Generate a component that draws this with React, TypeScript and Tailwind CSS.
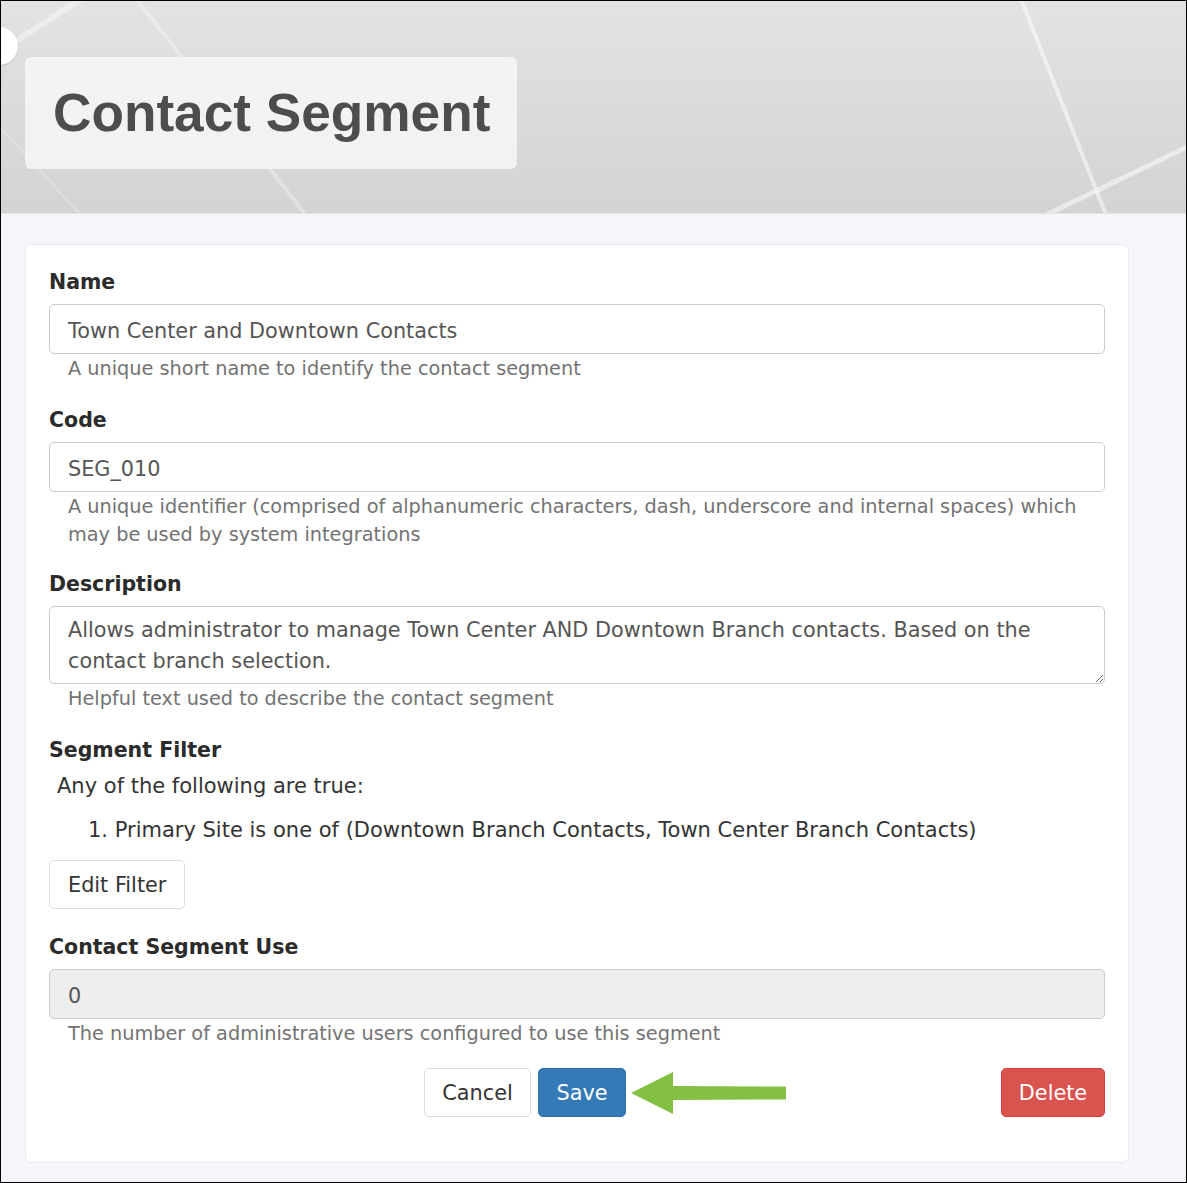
import React from 'react';

// Banner decoration: soft diagonal light streaks over the grey gradient.
const BannerStreaks: React.FC = () => (
  <svg className="absolute inset-0 h-full w-full" viewBox="0 0 1185 212" preserveAspectRatio="none">
    <g stroke="#ffffff" strokeLinecap="round" fill="none">
      <line x1="15" y1="40" x2="80" y2="-2" strokeWidth="6" strokeOpacity="0.4" />
      <line x1="135" y1="-2" x2="305" y2="214" strokeWidth="4" strokeOpacity="0.3" />
      <line x1="-2" y1="125" x2="80" y2="214" strokeWidth="3" strokeOpacity="0.18" />
      <line x1="1020" y1="-2" x2="1105" y2="214" strokeWidth="4" strokeOpacity="0.5" />
      <line x1="1188" y1="145" x2="1045" y2="214" strokeWidth="5" strokeOpacity="0.5" />
    </g>
  </svg>
);

// Green pointer arrow next to the Save button.
const PointerArrow: React.FC = () => (
  <svg width="156" height="42" viewBox="0 0 156 42" className="block">
    <polygon points="0,21 42,0 42,14 155,14.5 155,27.5 42,28 42,42" fill="#84c142" />
  </svg>
);

interface FieldProps {
  label: string;
  help?: React.ReactNode;
  children: React.ReactNode;
  spacing?: string;
}

const Field: React.FC<FieldProps> = ({ label, help, children, spacing = 'mt-[23px]' }) => (
  <div className={spacing}>
    <label className="block text-[20.5px] leading-[29px] font-bold text-[#2b2b2b] mb-[7px]">{label}</label>
    {children}
    {help && <p className="pt-[1px] pl-[19px] text-[19.3px] leading-[28px] text-[#737373]">{help}</p>}
  </div>
);

const inputClass =
  'block w-full h-[50px] px-[18px] pt-[3px] border border-[#cccccc] rounded-[5px] text-[20.8px] text-[#555555] bg-white outline-none';

export default function App() {
  return (
    <div className="w-[1187px] h-[1183px] overflow-hidden border border-black bg-[#f5f6fa] font-['DejaVu_Sans',sans-serif]">
      {/* Page banner */}
      <header className="relative h-[213px] border-b border-[#dfe5ec] bg-gradient-to-b from-[#e3e3e3] to-[#d3d3d3]">
        <BannerStreaks />
        <div className="absolute -left-[21px] top-[26px] h-[38px] w-[38px] rounded-full bg-white shadow-sm" />
        <div className="relative top-[56px] left-[24px] flex h-[112px] w-[492px] items-center rounded-[6px] bg-[#f3f3f3]/95 pl-[28px]">
          <h1 className="font-['Liberation_Sans',Arial,sans-serif] text-[53.2px] font-bold leading-none text-[#4d4d4d]">
            Contact Segment
          </h1>
        </div>
      </header>

      {/* Edit form card */}
      <main className="pt-[30px] pl-[24px]">
        <div className="w-[1104px] rounded-[6px] border border-[#e8eaef] bg-white p-[23px]">
          <Field spacing="" label="Name" help="A unique short name to identify the contact segment">
            <input className={inputClass} defaultValue="Town Center and Downtown Contacts" />
          </Field>

          <Field
            label="Code"
            help="A unique identifier (comprised of alphanumeric characters, dash, underscore and internal spaces) which may be used by system integrations"
          >
            <input className={inputClass} defaultValue="SEG_010" />
          </Field>

          <Field spacing="mt-[21px]" label="Description" help="Helpful text used to describe the contact segment">
            <textarea
              className="block w-full h-[78px] px-[18px] pt-[8px] pb-[6px] border border-[#cccccc] rounded-[5px] text-[20.8px] leading-[31px] text-[#555555] outline-none"
              defaultValue="Allows administrator to manage Town Center AND Downtown Branch contacts. Based on the contact branch selection."
            />
          </Field>

          <div className="mt-[23px]">
            <div className="text-[20.5px] leading-[29px] font-bold text-[#2b2b2b]">Segment Filter</div>
            <div className="mt-[6px] pl-[8px] text-[21px] leading-[30px] text-[#333333]">Any of the following are true:</div>
            <ol className="mt-[14px] pl-[39px] text-[21px] leading-[30px] text-[#333333]">
              <li>1. Primary Site is one of (Downtown Branch Contacts, Town Center Branch Contacts)</li>
            </ol>
            <button
              type="button"
              className="mt-[15px] h-[49px] rounded-[5px] border border-[#dddddd] bg-white px-[18px] pt-[2px] text-[20.8px] text-[#333333]"
            >
              Edit Filter
            </button>
          </div>

          <Field spacing="mt-[24px]" label="Contact Segment Use" help="The number of administrative users configured to use this segment">
            <input className={`${inputClass} !bg-[#eeeeee]`} defaultValue="0" disabled />
          </Field>

          {/* Actions */}
          <div className="mt-[20px] mb-[22px] flex items-center">
            <button
              type="button"
              className="ml-[375px] h-[49px] w-[107px] rounded-[5px] border border-[#dddddd] bg-white pt-[2px] text-[20.8px] text-[#333333]"
            >
              Cancel
            </button>
            <button
              type="button"
              className="ml-[7px] h-[49px] w-[88px] rounded-[5px] border border-[#2e6da4] bg-[#337ab7] pt-[2px] text-[20.8px] text-white"
            >
              Save
            </button>
            <div className="ml-[5px]">
              <PointerArrow />
            </div>
            <button
              type="button"
              className="ml-auto h-[49px] w-[104px] rounded-[5px] border border-[#d43f3a] bg-[#d9534f] pt-[2px] text-[20.8px] text-white"
            >
              Delete
            </button>
          </div>
        </div>
      </main>
    </div>
  );
}
